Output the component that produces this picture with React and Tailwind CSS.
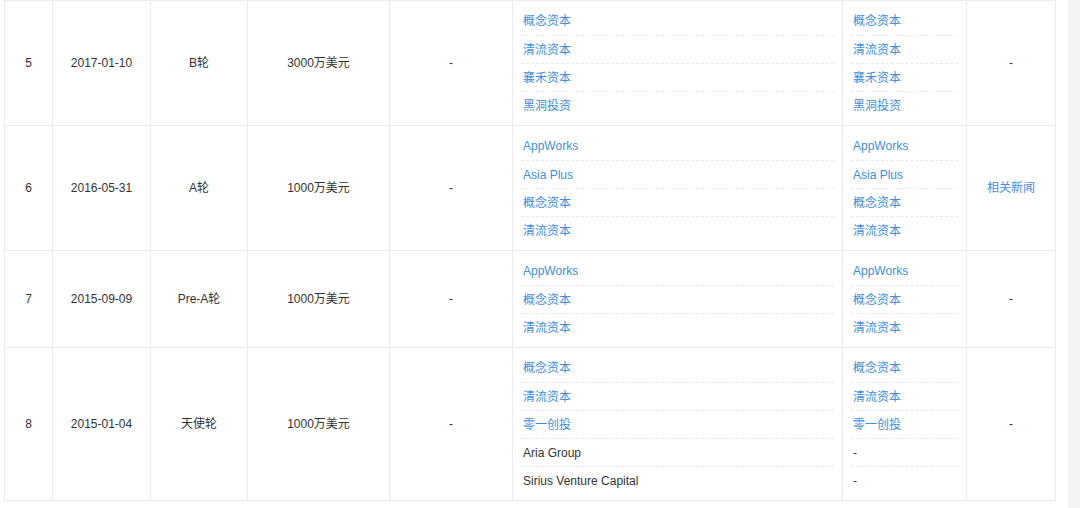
import React from "react";

const rows = [
  {
    no: 5,
    date: "2017-01-10",
    round: "B轮",
    amount: "3000万美元",
    valuation: "-",
    investors: ["概念资本", "清流资本", "襄禾资本", "黑洞投资"],
    leads: ["概念资本", "清流资本", "襄禾资本", "黑洞投资"],
    news: "-",
  },
  {
    no: 6,
    date: "2016-05-31",
    round: "A轮",
    amount: "1000万美元",
    valuation: "-",
    investors: ["AppWorks", "Asia Plus", "概念资本", "清流资本"],
    leads: ["AppWorks", "Asia Plus", "概念资本", "清流资本"],
    news: "相关新闻",
  },
  {
    no: 7,
    date: "2015-09-09",
    round: "Pre-A轮",
    amount: "1000万美元",
    valuation: "-",
    investors: ["AppWorks", "概念资本", "清流资本"],
    leads: ["AppWorks", "概念资本", "清流资本"],
    news: "-",
  },
  {
    no: 8,
    date: "2015-01-04",
    round: "天使轮",
    amount: "1000万美元",
    valuation: "-",
    investors: ["概念资本", "清流资本", "零一创投", "Aria Group", "Sirius Venture Capital"],
    leads: ["概念资本", "清流资本", "零一创投", "-", "-"],
    news: "-",
  },
];

const plain = ["Aria Group", "Sirius Venture Capital", "-"];

const ItemList = ({ items }) => (
  <div className="flex flex-col px-[8px] py-[6px]">
    {items.map((it, i) => (
      <div
        key={i}
        className={
          "flex h-[28px] items-center pl-[2px] " +
          (i > 0 ? "border-t border-dashed border-[#e6e8eb] " : "") +
          (plain.includes(it) ? "text-[#333]" : "text-[#3f8ed8] cursor-pointer")
        }
      >
        {it}
      </div>
    ))}
  </div>
);

const App = () => {
  const td = "border border-[#e8ecef] text-center align-middle p-0";
  return (
    <div
      className="flex w-[1080px] h-[508px] bg-white overflow-hidden text-[12px] text-[#333]"
      style={{ fontFamily: '"Liberation Sans", "Noto Sans CJK SC", sans-serif' }}
    >
      <div className="flex flex-col w-[1068px] pl-[4px]">
        <table className="table-fixed border-collapse w-[1051px]">
          <colgroup>
            <col className="w-[48px]" />
            <col className="w-[98px]" />
            <col className="w-[97px]" />
            <col className="w-[142px]" />
            <col className="w-[123px]" />
            <col className="w-[330px]" />
            <col className="w-[124px]" />
            <col className="w-[89px]" />
          </colgroup>
          <tbody>
            {rows.map((r) => (
              <tr key={r.no}>
                <td className={td}>{r.no}</td>
                <td className={td}>{r.date}</td>
                <td className={td}>{r.round}</td>
                <td className={td}>{r.amount}</td>
                <td className={td}>{r.valuation}</td>
                <td className="border border-[#e8ecef] p-0 text-left align-middle">
                  <ItemList items={r.investors} />
                </td>
                <td className="border border-[#e8ecef] p-0 text-left align-middle">
                  <ItemList items={r.leads} />
                </td>
                <td className={td + (r.news !== "-" ? " text-[#3f8ed8]" : "")}>{r.news}</td>
              </tr>
            ))}
          </tbody>
        </table>
      </div>
      <div className="w-[12px] h-full bg-[#f4f4f5]"></div>
    </div>
  );
};

export default App;
